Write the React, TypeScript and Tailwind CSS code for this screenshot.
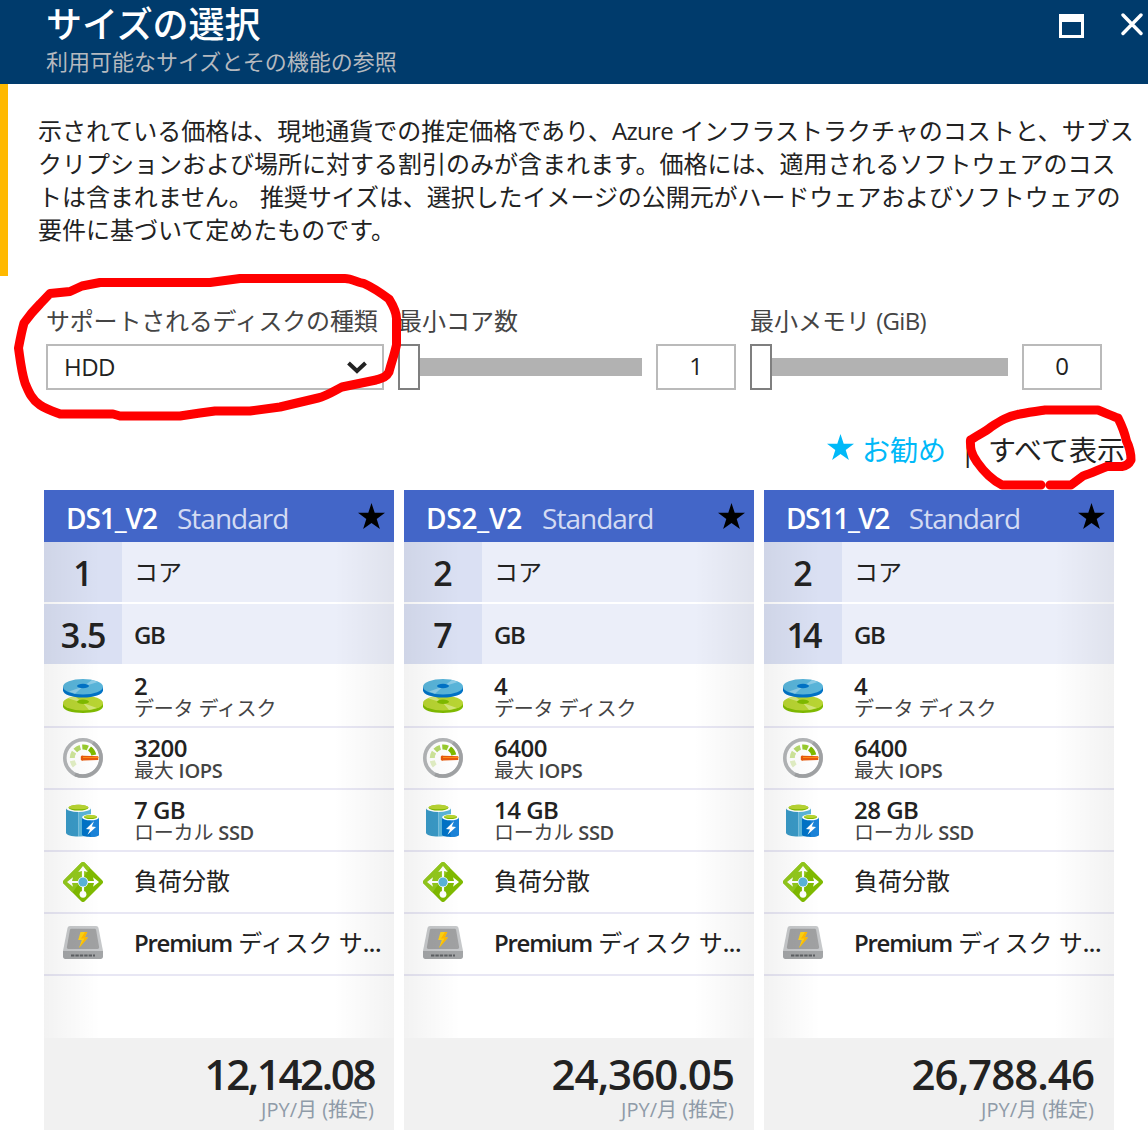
import type { ReactNode } from 'react';

type Plan = {
  name: string;
  nameTracking: string;
  cores: string;
  memory: string;
  memoryTracking: string;
  disks: string;
  iops: string;
  ssd: string;
  price: string;
  priceTracking: string;
};

const plans: Plan[] = [
  { name: 'DS1_V2', nameTracking: 'tracking-[-1.05px]', cores: '1', memory: '3.5', memoryTracking: 'tracking-[-1.2px]', disks: '2', iops: '3200', ssd: '7 GB', price: '12,142.08', priceTracking: 'tracking-[-2.4px]' },
  { name: 'DS2_V2', nameTracking: 'tracking-[-0.2px]', cores: '2', memory: '7', memoryTracking: 'tracking-normal', disks: '4', iops: '6400', ssd: '14 GB', price: '24,360.05', priceTracking: 'tracking-[-0.95px]' },
  { name: 'DS11_V2', nameTracking: 'tracking-[-1.5px]', cores: '2', memory: '14', memoryTracking: 'tracking-[-3px]', disks: '4', iops: '6400', ssd: '28 GB', price: '26,788.46', priceTracking: 'tracking-[-0.95px]' },
];

function Star({ className }: { className: string }) {
  return (
    <svg viewBox="0 0 27 26" className={className} fill="currentColor">
      <path d="M13.5 0 16.7 9.8H27L18.7 15.9 21.9 26 13.5 19.9 5.1 26 8.3 15.9 0 9.8H10.3Z" />
    </svg>
  );
}

function DisksIcon() {
  return (
    <svg viewBox="0 0 40 34" className="h-[34px] w-10">
      <path d="M0 24.5v3C0 31.2 9 34 20 34s20-2.800 20-6.500v-3Z" fill="#7fba00" />
      <ellipse cx="20" cy="24" rx="20" ry="7.500" fill="#b8d432" />
      <path d="M20 24 5 19.200l7-2Z M20 24l14 5 -8 2Z" fill="#d4e57a" />
      <ellipse cx="20" cy="22.700" rx="6" ry="2.200" fill="#7fba00" />
      <path d="M0 8v3.200C0 15.500 9 18.500 20 18.500s20-3 20-7.300V8Z" fill="#0072c6" />
      <ellipse cx="20" cy="7.700" rx="20" ry="7.700" fill="#59b4d9" />
      <path d="M20 7.500 29 .900l6 2Z M20 7.500 12 14.800l-6-2.400Z" fill="#8bcbe6" />
      <ellipse cx="20" cy="7" rx="6" ry="2.200" fill="#0072c6" />
    </svg>
  );
}

function GaugeIcon() {
  return (
    <svg viewBox="0 0 40 40" className="size-10" fill="none">
      <circle cx="20" cy="20" r="18.200" fill="#fff" stroke="#b3b5b7" strokeWidth="3.600" />
      <path d="M30 4.800A18.200 18.200 0 0 1 12 36.300" stroke="#9fa1a3" strokeWidth="3.600" />
      <path d="M11.800 27.800A11 11 0 0 1 9.400 22.800" stroke="#e3f0c5" strokeWidth="5" />
      <path d="M9.300 20A11 11 0 0 1 11 14.200" stroke="#cfe69b" strokeWidth="5" />
      <path d="M12.300 12.500A11 11 0 0 1 17.300 9.400" stroke="#b5d96a" strokeWidth="5" />
      <path d="M19.300 9A11 11 0 0 1 24.800 10.100" stroke="#97cb2c" strokeWidth="5" />
      <path d="M26.500 10.500A11 11 0 0 1 30.800 17" stroke="#7fba00" strokeWidth="5" />
      <path d="M17.800 18.500a2 2 0 0 1 2.500-.700l15 .500v3.600l-15 .500a2 2 0 0 1-2.500-.700Z" fill="#e8590c" />
      <path d="M20 19h15.500v1H20Z" fill="#ff8c1a" />
    </svg>
  );
}

function StorageIcon() {
  return (
    <svg viewBox="0 0 33 33" className="mr-px h-[33px] w-[33px]">
      <path d="M0 3.800v25C0 31 5.500 32.600 12.500 32.600V3.800Z" fill="#3999c6" />
      <path d="M12.500 3.800v28.800c7 0 12.500-1.600 12.500-3.800v-25Z" fill="#59b4d9" />
      <ellipse cx="12.500" cy="4" rx="12.500" ry="4" fill="#fff" />
      <ellipse cx="12.500" cy="3.700" rx="10" ry="2.900" fill="#7fba00" />
      <path d="M2.500 3.700c0-4 20-4 20 0-4 2-16 2-20 0Z" fill="#b8d432" />
      <path d="M16 13.600v17c0 1.500 3.500 2.400 8.500 2.400s8.500-.900 8.500-2.400v-17Z" fill="#0072c6" />
      <path d="M24.500 13.600V33c5 0 8.500-.900 8.500-2.400v-17Z" fill="#1a82d8" />
      <ellipse cx="24.500" cy="13.300" rx="8.500" ry="3" fill="#fff" />
      <ellipse cx="24.500" cy="13.100" rx="6.600" ry="2" fill="#7fba00" />
      <path d="M18 12.900c0-2.400 13-2.400 13 0-3 1.300-10 1.300-13 0Z" fill="#b8d432" />
      <path d="M28 17.300 20 25l4 .500-2.500 5.300 8.500-7.800-4.200-.500Z" fill="#fff" />
    </svg>
  );
}

function BalancerIcon() {
  return (
    <svg viewBox="0 0 40 40" className="size-10">
      <path d="M18.200.800a2.600 2.600 0 0 1 3.600 0l17.400 17.400a2.600 2.600 0 0 1 0 3.600L21.800 39.200a2.600 2.600 0 0 1-3.600 0L.800 21.800a2.600 2.600 0 0 1 0-3.600Z" fill="#7fba00" />
      <path d="M18.200.800a2.600 2.600 0 0 1 3.600 0L27 6 9.500 30.500.800 21.800a2.600 2.600 0 0 1 0-3.600Z" fill="#92c81c" />
      <path d="M20 8v24M8 20h24" stroke="#fff" strokeWidth="2.200" />
      <path d="m20 4 4.800 6-3.800-1h-2l-3.800 1ZM4 20l6-4.800-1 3.800v2l1 3.800ZM36 20l-6-4.800 1 3.800v2l-1 3.800Z" fill="#fff" />
      <circle cx="20" cy="32.300" r="3.400" fill="#fff" />
      <circle cx="20" cy="20" r="5.200" fill="#fff" />
      <circle cx="20" cy="20" r="4.500" fill="#59b4d9" />
    </svg>
  );
}

function PremiumDiskIcon() {
  return (
    <svg viewBox="0 0 40 33" className="mb-[3px] h-[33px] w-10">
      <path d="M7 0h26c1.300 0 2.200.800 2.500 2L40 25H0L4.500 2C4.800.800 5.700 0 7 0Z" fill="#c6c8ca" />
      <path d="M8.600 2.800h22.800c.900 0 1.500.500 1.700 1.300l3 16.900c.200 1-.500 2-1.600 2h-29c-1.100 0-1.800-1-1.600-2l3-16.900c.200-.800.800-1.300 1.700-1.300Z" fill="#a0a1a2" />
      <path d="M0 25h40v5.500c0 1.400-.900 2.500-2.300 2.500H2.300C.900 33 0 31.900 0 30.500Z" fill="#a3a5a7" />
      <path d="M8 29.500h24" stroke="#5c5f62" strokeWidth="2.200" strokeDasharray="3.400 1" />
      <path d="M17.500 6h6.800l-2.600 5.500h3.300L16 22l2.800-8h-3.600Z" fill="#fcd116" />
      <path d="M24.300 6 21.700 11.500H25L16 22l5.500-9.500H18L22 6Z" fill="#ffb900" />
    </svg>
  );
}

function Slider({ label, value, track }: { label: ReactNode; value: string; track: string }) {
  return (
    <div className="flex flex-col">
      <div className="h-[45px] whitespace-nowrap text-2xl leading-[43px] text-[#444]">{label}</div>
      <div className="flex items-center">
        <div className="h-[46px] w-[22px] border-2 border-[#7f7f7f] bg-white" />
        <div className={`h-[18px] bg-[#b2b2b2] ${track}`} />
        <div className="ml-3.5 flex h-[46px] w-20 items-center justify-center border-2 border-[#bababa] pb-0.5 text-2xl">{value}</div>
      </div>
    </div>
  );
}

function Spec({ icon, children }: { icon: ReactNode; children: ReactNode }) {
  return (
    <div className="flex h-[62px] items-center border-b-2 border-[#e8e7f4]">
      <div className="flex w-[78px] shrink-0 justify-center">{icon}</div>
      <div className="min-w-0 flex-1 whitespace-nowrap pl-3">{children}</div>
    </div>
  );
}

function Detail({ value, label }: { value: string; label: ReactNode }) {
  return (
    <>
      <div className="h-[23px] text-2xl font-semibold leading-[25px] tracking-[-0.5px]">{value}</div>
      <div className="h-[23px] text-xl leading-[26px] tracking-[-0.2px] text-[#444]">{label}</div>
    </>
  );
}

function Headline({ value, tracking, unit }: { value: string; tracking: string; unit: ReactNode }) {
  return (
    <div className="flex h-[60px] bg-[#ebeef9]">
      <div className={`flex w-[78px] items-center justify-center bg-[#dae0f3] pt-0.5 text-[34px] font-semibold leading-none ${tracking}`}>{value}</div>
      <div className="flex items-center pl-3 text-2xl">{unit}</div>
    </div>
  );
}

function PlanCard({ plan }: { plan: Plan }) {
  return (
    <div className="w-[350px]">
      <div className="flex h-[52px] items-center bg-[#4366c8] pl-[22px] pr-[9px] text-[28px] text-white">
        <span className={`pt-[3px] font-semibold ${plan.nameTracking}`}>{plan.name}</span>
        <span className="ml-5 pt-[3px] tracking-[-1px] text-[#d3dbf3]">Standard</span>
        <Star className="ml-auto h-[26px] w-[27px] text-black" />
      </div>
      <div className="relative h-[496px]">
        <div className="flex flex-col gap-0.5">
          <Headline value={plan.cores} tracking="tracking-normal" unit="コア" />
          <Headline value={plan.memory} tracking={plan.memoryTracking} unit={<span className="pt-0.5 font-semibold tracking-[-1.3px]">GB</span>} />
          <div>
            <Spec icon={<DisksIcon />}><Detail value={plan.disks} label="データ ディスク" /></Spec>
            <Spec icon={<GaugeIcon />}>
              <Detail value={plan.iops} label={<>最大 <span className="font-semibold tracking-[-0.3px]">IOPS</span></>} />
            </Spec>
            <Spec icon={<StorageIcon />}>
              <Detail value={plan.ssd} label={<>ローカル <span className="font-semibold tracking-[-0.3px]">SSD</span></>} />
            </Spec>
            <Spec icon={<BalancerIcon />}><div className="pb-0.5 text-2xl leading-8">負荷分散</div></Spec>
            <Spec icon={<PremiumDiskIcon />}>
              <div className="pb-0.5 text-2xl leading-8">
                <span className="font-semibold tracking-[-1.25px]">Premium</span> ディスク サ<span className="font-semibold tracking-[-0.5px]">...</span>
              </div>
            </Spec>
          </div>
        </div>
        <div className="pointer-events-none absolute inset-y-0 left-0 w-14 bg-linear-to-r from-black/5 to-transparent" />
        <div className="pointer-events-none absolute inset-y-0 right-0 w-[60px] bg-linear-to-l from-black/5 to-transparent" />
      </div>
      <div className="flex h-[92px] flex-col items-end bg-[#f1f1f1] pr-5">
        <div className={`mt-3.5 h-11 text-[42px] font-semibold leading-[44px] ${plan.priceTracking}`}>{plan.price}</div>
        <div className="text-xl leading-[27px] text-[#8f9ba8]">JPY/月 (推定)</div>
      </div>
    </div>
  );
}

export default function App() {
  return (
    <div className="relative h-[1138px] w-[1148px] overflow-hidden bg-white font-['Open_Sans','Noto_Sans_CJK_JP',sans-serif] text-[#222]" lang="ja">
      <header className="flex h-[84px] justify-between bg-[#003b6c] pl-[46px] text-white">
        <div className="whitespace-nowrap">
          <h1 className="h-[50px] text-4xl font-medium leading-[50px] tracking-[-0.1px]">サイズの選択</h1>
          <p className="text-[22px] leading-[22px] text-[#b5b9bf]">利用可能なサイズとその機能の参照</p>
        </div>
        <div className="flex items-start gap-[37px] pr-[5px] pt-3.5">
          <div className="h-6 w-[25px] border-[3.5px] border-t-8 border-white" />
          <svg viewBox="0 0 22 24" className="-mt-0.5 h-6 w-[22px]" stroke="#fff" strokeWidth="3.400" strokeLinecap="round">
            <path d="M2 3 20 21.500M20 3 2 21.500" />
          </svg>
        </div>
      </header>

      <section className="h-48 whitespace-nowrap border-l-8 border-[#ffb900] pl-[30px] pt-[30px] text-2xl leading-[33px]">
        <div>示されている価格は、現地通貨での推定価格であり、<span className="tracking-[-0.7px]">Azure</span> <span className="pl-px">インフラストラクチャのコストと、サブス</span></div>
        <div>クリプションおよび場所に対する割引のみが含まれます。価格には、適用されるソフトウェアのコス</div>
        <div className="tracking-[-0.06px]">トは含まれません。 <span className="pl-px">推奨サイズは、選択したイメージの公開元がハードウェアおよびソフトウェアの</span></div>
        <div>要件に基づいて定めたものです。</div>
      </section>

      <section className="flex gap-3.5 pl-[46px] pt-[23px]">
        <div className="w-[338px]">
          <div className="h-[45px] whitespace-nowrap text-2xl leading-[43px] tracking-[-0.2px] text-[#444]">サポートされるディスクの種類</div>
          <div className="flex h-[46px] items-center justify-between border-2 border-[#bababa] pl-4 pr-[15px] text-2xl">
            <span className="tracking-[-0.5px]">HDD</span>
            <svg viewBox="0 0 20 13" className="h-[13px] w-5" fill="none" stroke="#222" strokeWidth="4">
              <path d="M1.500 2 10 10 18.500 2" />
            </svg>
          </div>
        </div>
        <Slider label="最小コア数" value="1" track="w-[222px]" />
        <Slider label={<>最小メモリ <span className="tracking-[-0.7px]">(GiB)</span></>} value="0" track="w-[236px]" />
      </section>

      <nav className="flex h-[100px] items-center pl-[827px] pt-5 text-[28px]">
        <Star className="-mt-1.5 h-[26px] w-[27px] text-[#00b9f8]" />
        <span className="ml-2 text-[#00b9f8]">お勧め</span>
        <span className="ml-3.5 w-7">|</span>
        <span className="whitespace-nowrap">すべて表示</span>
      </nav>

      <main className="flex gap-2.5 pl-11">
        {plans.map((plan) => <PlanCard key={plan.name} plan={plan} />)}
      </main>

      <svg viewBox="0 0 1148 260" className="pointer-events-none absolute left-0 top-[260px] h-[260px] w-[1148px]" fill="none" stroke="#f00" strokeWidth="9" strokeLinejoin="round" strokeLinecap="round">
        <path d="M240 18.500H345C352 18.500 358 23 364 23.500 374 28 381 33 389 39 394 47 397 53 396.500 60V85C394 96 391 104 389 112 386 118 381 118.500 376 120L342 127C334 131 327 136 318 138L280 147 250 151H215L200 153 180 156H120L113 154H60C52 151 46 149 40 145 31 139 28 130 25 123 21 110 20 98 18.500 88 20 80 22 70 24 63 29 56 34 50 40 44L50 33.500 70 31.500 82 26 100 22.500H210Z" />
        <path d="M1041 225H1002C992 220 984 212 977 202 971 194 970 188 970.500 180 976 176 985 172 991 167 1000 161 1008 156 1020 154 1030 152 1038 151 1045 150H1098C1106 153 1112 156 1118 158 1122 166 1125 174 1126.500 181 1130 188 1131 194 1131 200 1129 204 1126 206 1122 206.500H1107C1098 210 1090 214 1083 216L1071 225H1050" />
      </svg>
    </div>
  );
}
